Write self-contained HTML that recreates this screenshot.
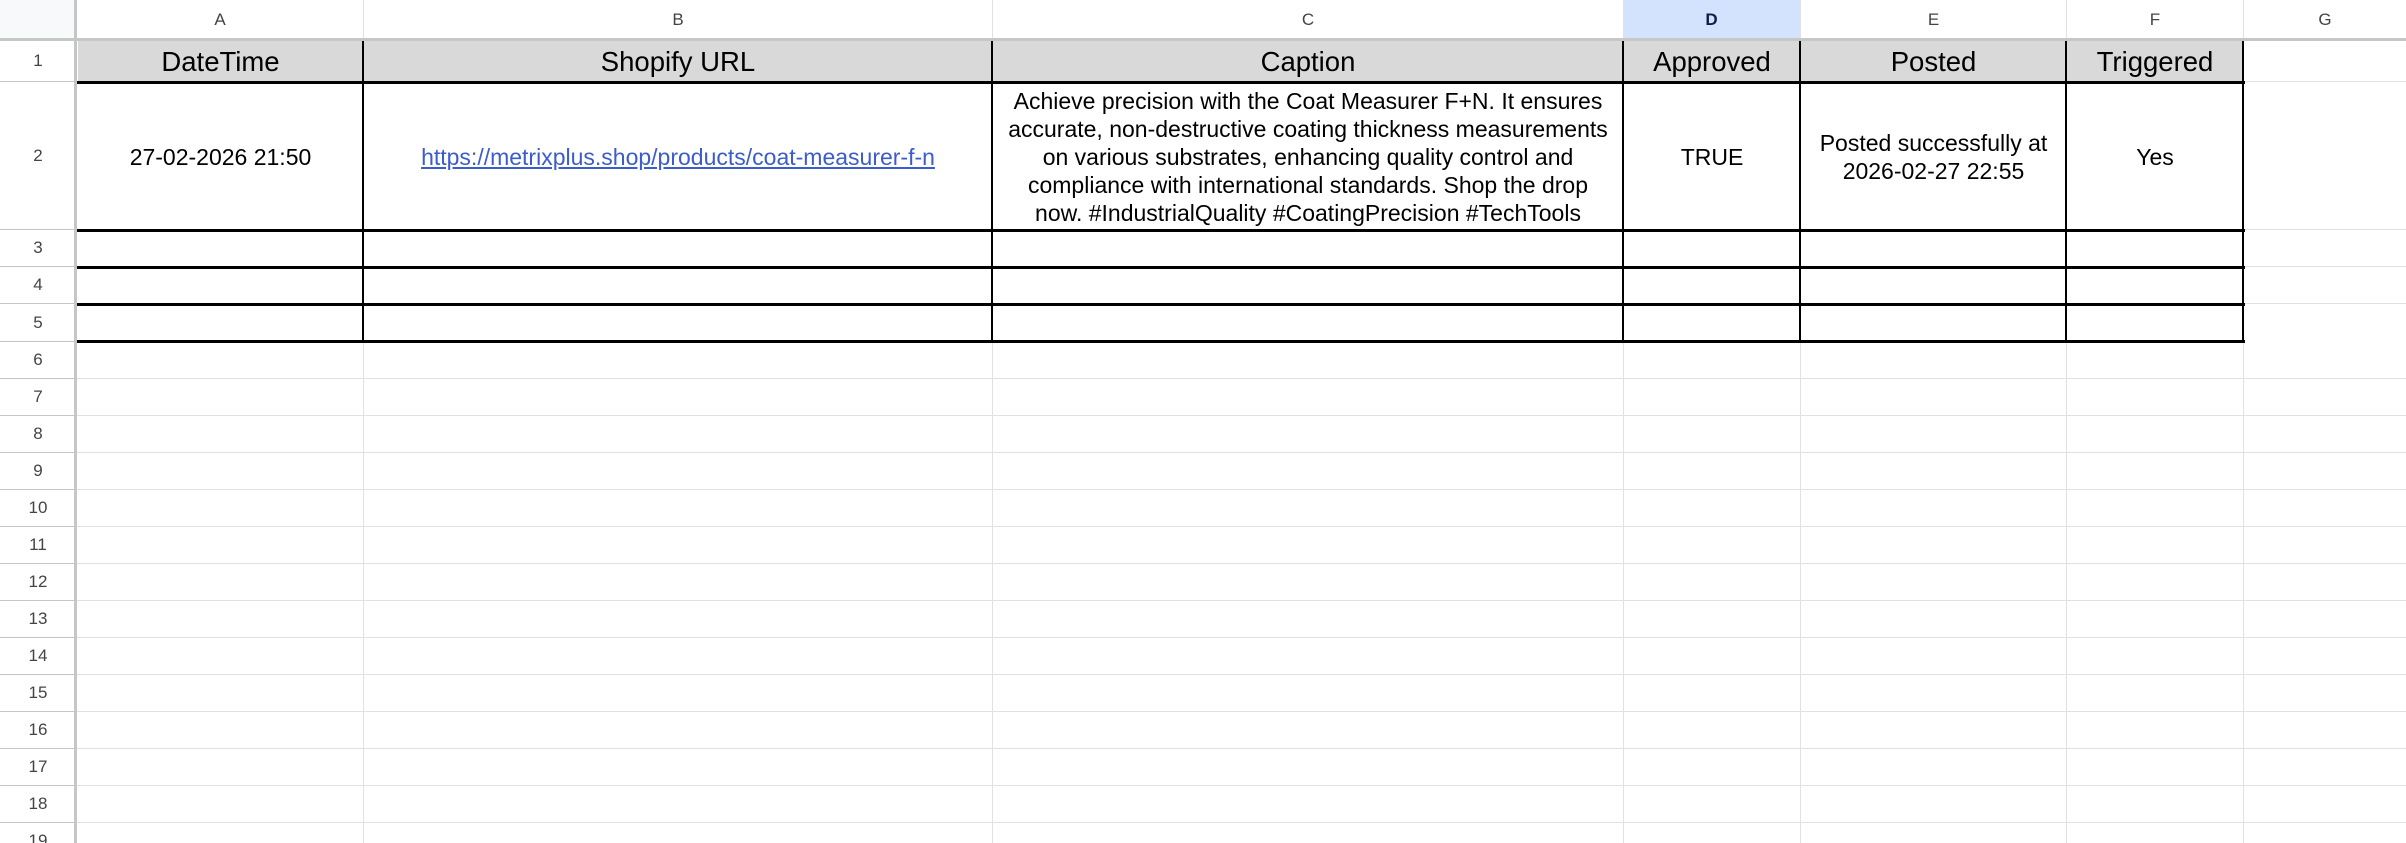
<!DOCTYPE html>
<html><head><meta charset="utf-8">
<style>
html,body{margin:0;padding:0;width:2406px;height:843px;overflow:hidden;}
body{background:#fff;position:relative;font-family:"Liberation Sans",Arial,sans-serif;}
div{box-sizing:border-box;}
.a{position:absolute;}
.vl{position:absolute;top:40px;bottom:0;width:1px;background:#e1e1e1;}
.hl{position:absolute;left:77px;right:0;height:1px;background:#e1e1e1;}
.ch{position:absolute;top:0;height:39px;line-height:39px;text-align:center;font-size:17px;color:#444;}
.rh{position:absolute;left:0;width:76px;text-align:center;font-size:17px;color:#444;border-bottom:1px solid #c4c7c5;}
.bv{position:absolute;top:40px;height:302px;width:2px;background:#000;}
.bh{position:absolute;left:77px;width:2168px;background:#000;}
.c{position:absolute;display:flex;align-items:center;justify-content:center;text-align:center;color:#000;}
.h{top:41px;height:41px;font-size:27.5px;background:#d9d9d9;}
.d{top:83px;height:147px;font-size:23px;line-height:28px;}
</style></head><body>
<div class="a" style="left:0;top:0;width:2406px;height:843px;overflow:hidden;">
<div class="vl" style="left:363px"></div>
<div class="vl" style="left:992px"></div>
<div class="vl" style="left:1623px"></div>
<div class="vl" style="left:1800px"></div>
<div class="vl" style="left:2066px"></div>
<div class="vl" style="left:2243px"></div>
<div class="a" style="left:77px;right:0;top:342px;bottom:0;background:repeating-linear-gradient(to bottom,transparent 0,transparent 36px,#e1e1e1 36px,#e1e1e1 37px);"></div>
<div class="hl" style="top:81px"></div>
<div class="hl" style="top:229px"></div>
<div class="hl" style="top:266px"></div>
<div class="hl" style="top:303px"></div>

<div class="c h" style="left:78px;width:285px">DateTime</div>
<div class="c h" style="left:364px;width:628px">Shopify URL</div>
<div class="c h" style="left:993px;width:630px">Caption</div>
<div class="c h" style="left:1624px;width:176px">Approved</div>
<div class="c h" style="left:1801px;width:265px">Posted</div>
<div class="c h" style="left:2067px;width:176px">Triggered</div>

<div class="c d" style="left:78px;width:285px">27-02-2026 21:50</div>
<div class="c d" style="left:364px;width:628px"><span style="color:#3c5ccc;text-decoration:underline">https://metrixplus.shop/products/coat-measurer-f-n</span></div>
<div class="c d" style="left:993px;width:630px">Achieve precision with the Coat Measurer F+N. It ensures<br>accurate, non-destructive coating thickness measurements<br>on various substrates, enhancing quality control and<br>compliance with international standards. Shop the drop<br>now. #IndustrialQuality #CoatingPrecision #TechTools</div>
<div class="c d" style="left:1624px;width:176px">TRUE</div>
<div class="c d" style="left:1801px;width:265px">Posted successfully at<br>2026-02-27 22:55</div>
<div class="c d" style="left:2067px;width:176px">Yes</div>

<div class="bv" style="left:362px"></div>
<div class="bv" style="left:991px"></div>
<div class="bv" style="left:1622px"></div>
<div class="bv" style="left:1799px"></div>
<div class="bv" style="left:2065px"></div>
<div class="bv" style="left:2242px"></div>
<div class="bh" style="top:81px;height:3px"></div>
<div class="bh" style="top:229px;height:3px"></div>
<div class="bh" style="top:266px;height:3px"></div>
<div class="bh" style="top:303px;height:3px"></div>
<div class="bh" style="top:340px;height:3px"></div>

<div class="a" style="left:0;top:0;width:2406px;height:38px;background:#fff;"></div>
<div class="ch" style="left:77px;width:286px">A</div>
<div class="ch" style="left:364px;width:628px">B</div>
<div class="ch" style="left:993px;width:630px">C</div>
<div class="ch" style="left:1623px;width:177px;background:#d3e3fd;color:#0b1f4b;font-weight:bold">D</div>
<div class="ch" style="left:1801px;width:265px">E</div>
<div class="ch" style="left:2067px;width:176px">F</div>
<div class="ch" style="left:2244px;width:162px">G</div>
<div class="a" style="left:363px;top:0;width:1px;height:39px;background:#e1e1e1"></div>
<div class="a" style="left:992px;top:0;width:1px;height:39px;background:#e1e1e1"></div>
<div class="a" style="left:1800px;top:0;width:1px;height:39px;background:#e1e1e1"></div>
<div class="a" style="left:2066px;top:0;width:1px;height:39px;background:#e1e1e1"></div>
<div class="a" style="left:2243px;top:0;width:1px;height:39px;background:#e1e1e1"></div>
<div class="a" style="left:0;top:38px;width:2406px;height:3px;background:#c4c7c5"></div>
<div class="a" style="left:0;top:0;width:74px;height:38px;background:#f8f9fa"></div>

<div class="a" style="left:0;top:41px;width:77px;height:802px;background:#fff"></div>
<div class="rh" style="top:41px;height:41px;line-height:40px">1</div>
<div class="rh" style="top:82px;height:148px;line-height:147px">2</div>
<div class="rh" style="top:230px;height:37px;line-height:36px">3</div>
<div class="rh" style="top:267px;height:37px;line-height:36px">4</div>
<div class="rh" style="top:304px;height:38px;line-height:37px">5</div>
<div class="rh" style="top:342px;height:37px;line-height:36px">6</div>
<div class="rh" style="top:379px;height:37px;line-height:36px">7</div>
<div class="rh" style="top:416px;height:37px;line-height:36px">8</div>
<div class="rh" style="top:453px;height:37px;line-height:36px">9</div>
<div class="rh" style="top:490px;height:37px;line-height:36px">10</div>
<div class="rh" style="top:527px;height:37px;line-height:36px">11</div>
<div class="rh" style="top:564px;height:37px;line-height:36px">12</div>
<div class="rh" style="top:601px;height:37px;line-height:36px">13</div>
<div class="rh" style="top:638px;height:37px;line-height:36px">14</div>
<div class="rh" style="top:675px;height:37px;line-height:36px">15</div>
<div class="rh" style="top:712px;height:37px;line-height:36px">16</div>
<div class="rh" style="top:749px;height:37px;line-height:36px">17</div>
<div class="rh" style="top:786px;height:37px;line-height:36px">18</div>
<div class="rh" style="top:823px;height:37px;line-height:36px">19</div>
<div class="a" style="left:74px;top:0;width:3px;height:843px;background:#c4c7c5"></div>
</div>
</body></html>
